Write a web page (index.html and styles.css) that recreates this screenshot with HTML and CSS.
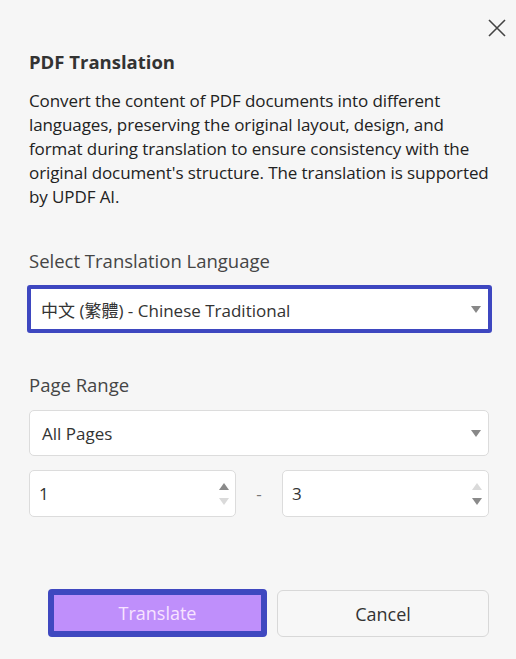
FILE: index.html
```html
<!DOCTYPE html>
<html lang="en">
<head>
<meta charset="utf-8">
<title>PDF Translation</title>
<link rel="stylesheet" href="styles.css">
</head>
<body>
<div class="dialog">
  <div class="topbar">
    <button class="close" aria-label="Close">
      <svg width="18" height="18" viewBox="0 0 18 18"><path d="M1 1 L17 17 M17 1 L1 17" stroke="#444" stroke-width="1.6" fill="none"/></svg>
    </button>
  </div>
  <h1 class="title">PDF Translation</h1>
  <p class="desc">Convert the content of PDF documents into different languages, preserving the original layout, design, and format during translation to ensure consistency with the original document's structure. The translation is supported by UPDF AI.</p>

  <div class="label lang-label">Select Translation Language</div>
  <div class="select focused">
    <span class="value">中文 (繁體) - Chinese Traditional</span>
    <span class="caret"></span>
  </div>

  <div class="label range-label">Page Range</div>
  <div class="select pages">
    <span class="value">All Pages</span>
    <span class="caret"></span>
  </div>

  <div class="range">
    <div class="spin">
      <span class="value">1</span>
      <span class="arrows"><span class="up dark"></span><span class="down light"></span></span>
    </div>
    <span class="dash">-</span>
    <div class="spin">
      <span class="value">3</span>
      <span class="arrows"><span class="up light"></span><span class="down dark"></span></span>
    </div>
  </div>

  <div class="actions">
    <button class="btn primary">Translate</button>
    <button class="btn secondary">Cancel</button>
  </div>
</div>
</body>
</html>
```
FILE: styles.css
```css
* { box-sizing: border-box; }
html, body { margin: 0; padding: 0; }
body {
  background: #f6f6f6;
  font-family: "Open Sans", "Noto Sans", "Noto Sans CJK TC", sans-serif;
  color: #222;
  width: 516px;
  height: 659px;
  overflow: hidden;
}
.dialog {
  padding: 0 27px 0 29px;
}
.topbar {
  height: 50px;
  display: flex;
  justify-content: flex-end;
  align-items: flex-start;
  margin-right: -17px;
}
.close {
  margin-top: 19px;
  width: 18px;
  height: 18px;
  padding: 0;
  border: 0;
  background: none;
  display: flex;
}
.title {
  margin: 0;
  font-size: 18.5px;
  line-height: 24px;
  font-weight: 700;
  color: #333;
}
.desc {
  margin: 15px -8px 0 0;
  font-size: 17px;
  line-height: 24px;
  letter-spacing: -0.1px;
  color: #222;
}
.label {
  font-size: 18.5px;
  line-height: 24px;
  color: #454545;
}
.lang-label { margin-top: 40px; }
.range-label { margin-top: 40px; }
.select {
  margin-top: 12px;
  background: #fff;
  border: 1px solid #dcdcdc;
  border-radius: 5px;
  height: 46px;
  display: flex;
  align-items: center;
  padding: 0 7px 0 12px;
  font-size: 17px;
  color: #333;
}
.select .value { flex: 1; }
.select.focused {
  margin-left: -2px;
  margin-right: -3px;
  height: 48px;
  border: 4px solid #3e47c0;
  border-radius: 3px;
  padding: 0 7px 0 10px;
}
.pages { margin-top: 13px; }
.caret {
  width: 0;
  height: 0;
  border-left: 5px solid transparent;
  border-right: 5px solid transparent;
  border-top: 7px solid #888;
}
.range {
  margin-top: 14px;
  display: flex;
  align-items: center;
}
.spin {
  flex: 0 0 207px;
  height: 47px;
  background: #fff;
  border: 1px solid #dcdcdc;
  border-radius: 5px;
  display: flex;
  align-items: center;
  padding: 0 6px 0 9px;
  font-size: 17px;
  color: #333;
}
.spin .value { flex: 1; }
.arrows {
  display: flex;
  flex-direction: column;
  gap: 8px;
}
.up, .down {
  width: 0;
  height: 0;
  border-left: 5px solid transparent;
  border-right: 5px solid transparent;
}
.up.dark { border-bottom: 7px solid #8a8a8a; }
.up.light { border-bottom: 7px solid #dadada; }
.down.dark { border-top: 7px solid #8a8a8a; }
.down.light { border-top: 7px solid #dadada; }
.dash {
  flex: 1;
  text-align: center;
  color: #777;
  font-size: 17px;
}
.actions {
  margin-top: 72px;
  display: flex;
  gap: 10px;
  padding-left: 19px;
}
.btn {
  height: 48px;
  font-family: inherit;
  font-size: 18px;
  border-radius: 4px;
}
.primary {
  width: 219px;
  background: #bf8ffb;
  border: 6px solid #3f48c0;
  color: #f8e4ff;
}
.secondary {
  flex: 1;
  height: 47px;
  margin-top: 1px;
  background: #f7f7f7;
  border: 1px solid #d8d8d8;
  border-radius: 6px;
  color: #333;
}
```
